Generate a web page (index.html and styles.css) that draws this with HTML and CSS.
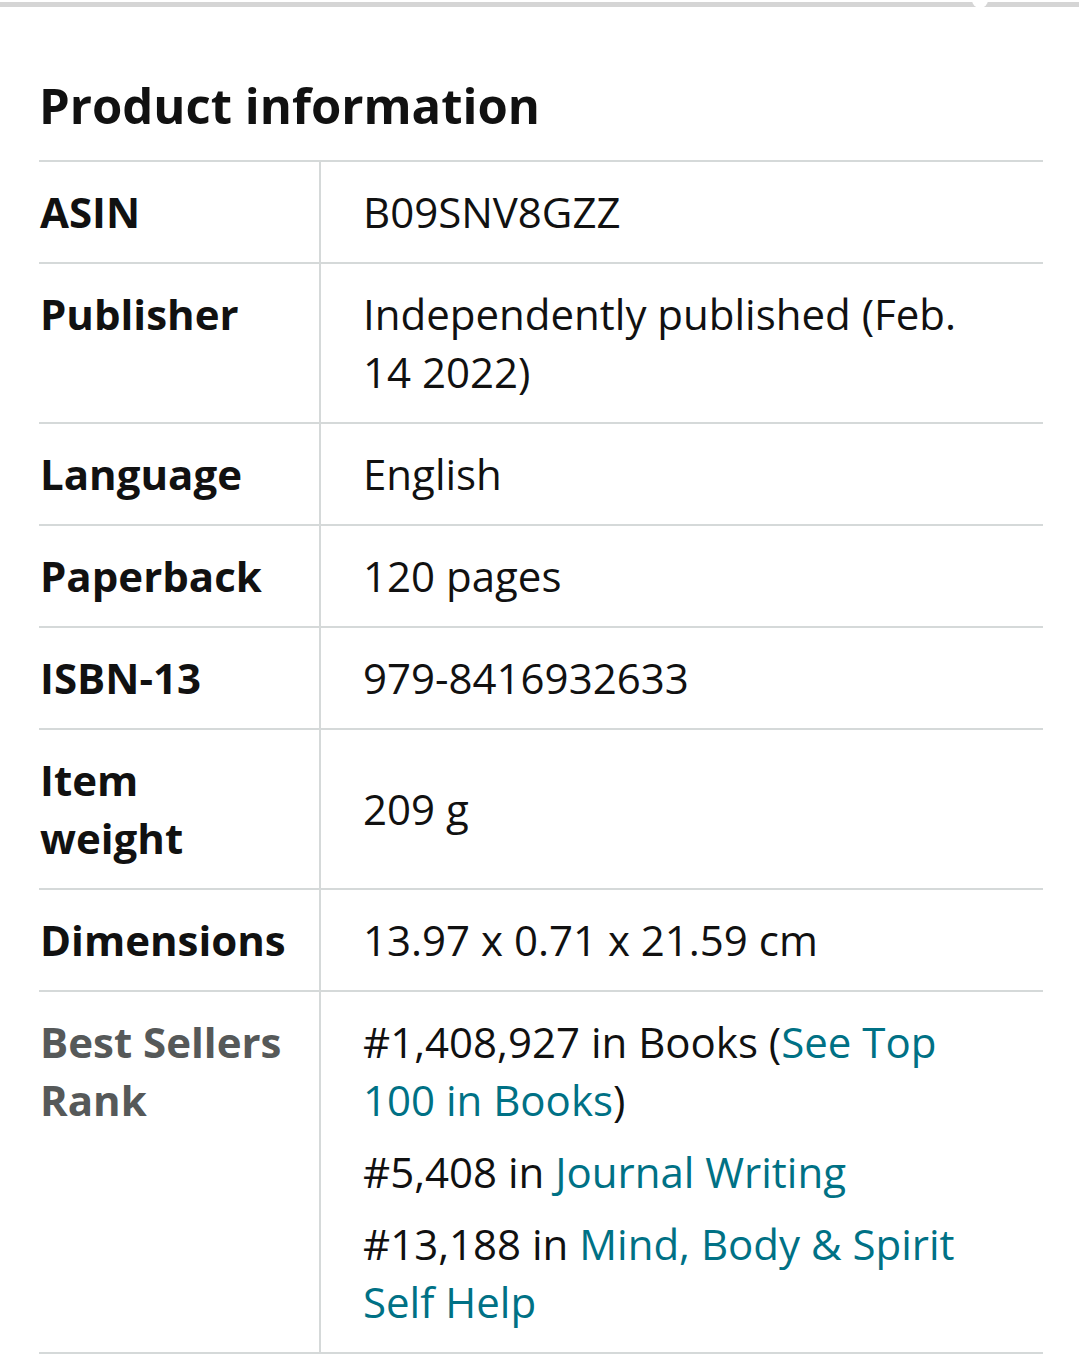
FILE: index.html
```html
<!DOCTYPE html>
<html lang="en">
<head>
<meta charset="utf-8">
<title>Product information</title>
<link rel="stylesheet" href="styles.css">
</head>
<body>
<div class="topbar"><span class="notch"></span></div>
<section class="product-info">
  <h2 class="title">Product information</h2>
  <table class="info-table">
    <tbody>
      <tr><th>ASIN</th><td>B09SNV8GZZ</td></tr>
      <tr><th>Publisher</th><td>Independently published (Feb. 14 2022)</td></tr>
      <tr><th>Language</th><td>English</td></tr>
      <tr><th>Paperback</th><td>120 pages</td></tr>
      <tr><th>ISBN-13</th><td>979-8416932633</td></tr>
      <tr><th>Item weight</th><td>209 g</td></tr>
      <tr><th>Dimensions</th><td>13.97 x 0.71 x 21.59 cm</td></tr>
      <tr class="rank-row">
        <th class="muted">Best Sellers Rank</th>
        <td>
          <p class="rank">#1,408,927 in Books (<a href="#">See Top 100 in Books</a>)</p>
          <p class="rank">#5,408 in <a href="#">Journal Writing</a></p>
          <p class="rank">#13,188 in <a href="#">Mind, Body &amp; Spirit Self Help</a></p>
        </td>
      </tr>
    </tbody>
  </table>
</section>
</body>
</html>
```

FILE: styles.css
```css
html, body {
  margin: 0;
  padding: 0;
  background: #ffffff;
}
body {
  font-family: "Open Sans", "Noto Sans", sans-serif;
  color: #111111;
}
.topbar {
  position: relative;
  margin-top: 2px;
  height: 5px;
  background: #d5d5d5;
}
.notch {
  position: absolute;
  left: 972px;
  top: -4px;
  width: 16px;
  height: 10px;
  border-radius: 0 0 8px 8px;
  background: #ffffff;
}
.product-info {
  padding: 0 36px 0 39px;
}
.title {
  margin: 0;
  padding: 68px 0 25px 0;
  font-size: 49px;
  line-height: 60px;
  font-weight: 700;
  color: #111111;
}
.info-table {
  width: 100%;
  border-collapse: collapse;
  border-top: 2px solid #d5d9d9;
}
.info-table tr {
  border-bottom: 2px solid #d5d9d9;
}
.info-table th,
.info-table td {
  font-size: 42px;
  line-height: 58px;
  padding: 21px 0;
}
.info-table th {
  width: 246px;
  padding-left: 1px;
  padding-right: 33px;
  text-align: left;
  vertical-align: top;
  font-weight: 700;
  border-right: 2px solid #d5d9d9;
}
.info-table td {
  padding-left: 42px;
  padding-right: 60px;
  vertical-align: middle;
  font-weight: 400;
}
.rank-row td {
  vertical-align: top;
}
.muted {
  color: #565959;
}
.rank {
  margin: 0 0 14px;
}
.rank:last-child {
  margin-bottom: 0;
}
.rank a {
  color: #007185;
  text-decoration: none;
}
```
